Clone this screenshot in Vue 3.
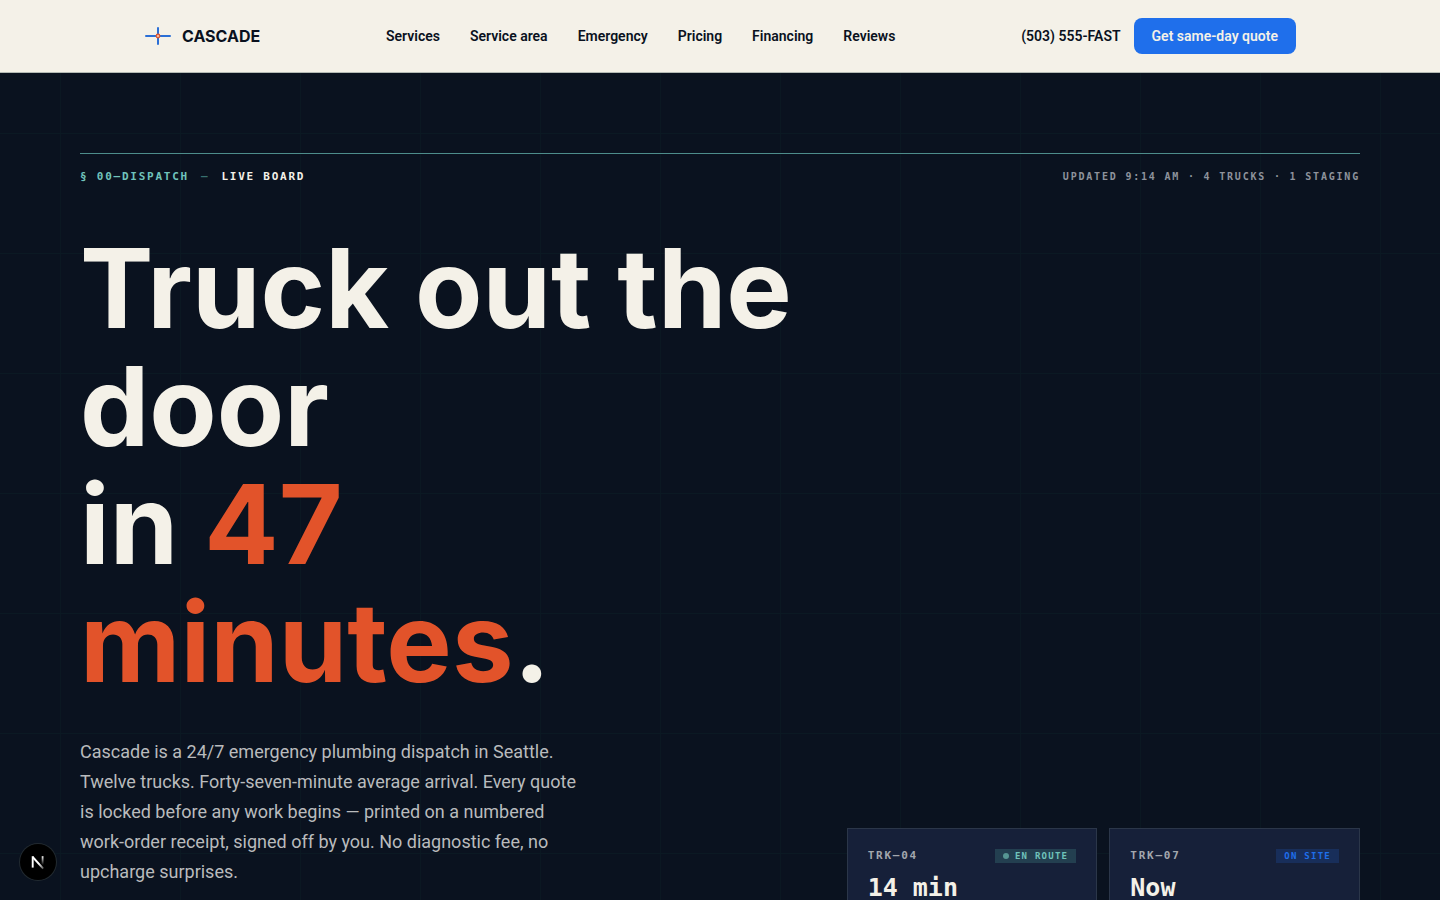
<script setup>
const links = ['Services', 'Service area', 'Emergency', 'Pricing', 'Financing', 'Reviews']
const trucks = [
  { id: 'TRK—04', status: 'EN ROUTE', kind: 'route', eta: '14 min' },
  { id: 'TRK—07', status: 'ON SITE', kind: 'site', eta: 'Now' },
]
</script>

<template>
  <div class="page">
    <header class="topbar">
      <div class="topbar-inner">
        <a class="brand" href="#">
          <svg width="28" height="18" viewBox="0 0 28 18" aria-hidden="true">
            <path d="M2 9H26M14 1V17" fill="none" stroke="#2b6fd6" stroke-width="2" stroke-linecap="round" />
            <circle cx="14" cy="9" r="1.8" fill="#f3b79c" stroke="#e2532a" stroke-width="1.2" />
          </svg>
          <span>CASCADE</span>
        </a>
        <nav class="nav" aria-label="Main">
          <a v-for="link in links" :key="link" href="#">{{ link }}</a>
        </nav>
        <div class="actions">
          <a class="phone" href="tel:+15035553278">(503) 555-FAST</a>
          <button class="quote" type="button">Get same-day quote</button>
        </div>
      </div>
    </header>

    <main class="hero">
      <div class="board-bar">
        <p class="board-title"><span>§ 00—DISPATCH</span><span class="dash">—</span><strong>LIVE BOARD</strong></p>
        <p class="board-meta">UPDATED 9:14 AM · 4 TRUCKS · 1 STAGING</p>
      </div>
      <div class="hero-grid">
        <div class="copy">
          <h1>Truck out the door<br />in <em>47<br />minutes</em>.</h1>
          <p class="lede">
            Cascade is a 24/7 emergency plumbing dispatch in Seattle. Twelve trucks.
            Forty-seven-minute average arrival. Every quote is locked before any work
            begins — printed on a numbered <span class="keep">work-order</span> receipt,
            signed off by you. No diagnostic fee, no upcharge surprises.
          </p>
        </div>
        <div class="trucks">
          <article v-for="truck in trucks" :key="truck.id" class="truck">
            <div class="truck-head">
              <span class="truck-id">{{ truck.id }}</span>
              <span class="status" :class="truck.kind"><i v-if="truck.kind === 'route'" class="dot"></i>{{ truck.status }}</span>
            </div>
            <div class="eta">{{ truck.eta }}</div>
          </article>
        </div>
      </div>
    </main>

    <button class="dev-badge" type="button" aria-label="Open developer tools">
      <svg width="36" height="36" viewBox="0 0 36 36" fill="none" aria-hidden="true">
        <defs>
          <linearGradient id="diag" x1="20" y1="19" x2="25" y2="26" gradientUnits="userSpaceOnUse">
            <stop stop-color="#fff" />
            <stop offset="1" stop-color="#fff" stop-opacity="0.1" />
          </linearGradient>
          <linearGradient id="stem" x1="23" y1="12" x2="23" y2="21" gradientUnits="userSpaceOnUse">
            <stop stop-color="#fff" />
            <stop offset="1" stop-color="#fff" stop-opacity="0" />
          </linearGradient>
        </defs>
        <path d="M12.7 13L23.2 24.6" stroke="url(#diag)" stroke-width="1.9" />
        <path d="M12.7 23.6V12.2" stroke="#fff" stroke-width="1.9" />
        <path d="M22.6 12.2V21" stroke="url(#stem)" stroke-width="1.8" />
      </svg>
    </button>
  </div>
</template>

<style>
body { background: #0a111e; }
</style>

<style scoped>
.page {
  height: 100vh;
  overflow: hidden;
  display: flex;
  flex-direction: column;
  background: #0a121f;
  font-family: Roboto, "Noto Sans", sans-serif;
  color: #f4f1e8;
}
a { color: inherit; text-decoration: none; }
p, h1 { margin: 0; }

.topbar {
  flex: none;
  background: #f4f1e8;
  border-bottom: 1px solid #b5bbb5;
  color: #0a111e;
}
.topbar-inner {
  display: flex;
  align-items: center;
  justify-content: space-between;
  max-width: 1152px;
  height: 72px;
  margin: 0 auto;
  font-size: 14px;
  font-weight: 600;
}
.brand {
  display: flex;
  align-items: center;
  gap: 10px;
  font-family: Inter, sans-serif;
  font-size: 16px;
  font-weight: 700;
}
.nav { display: flex; gap: 30px; }
.actions { display: flex; align-items: center; gap: 13px; }
.quote {
  height: 36px;
  padding: 0 18px;
  border: 0;
  border-radius: 8px;
  background: #1f6feb;
  color: #f4f1e8;
  font: inherit;
}

.hero {
  flex: none;
  padding: 80px 80px 0;
  background:
    linear-gradient(#0b1923 1px, transparent 1px) 0 60px / 120px 120px,
    linear-gradient(90deg, #0b1822 1px, transparent 1px) 60px 0 / 120px 120px,
    #0a121f;
}
.board-bar {
  display: flex;
  justify-content: space-between;
  align-items: center;
  border-top: 1px solid #4d8d8b;
  padding-top: 15px;
  font-family: "DejaVu Sans Mono", monospace;
  line-height: 16px;
}
.board-title {
  display: flex;
  gap: 12px;
  font-size: 11px;
  font-weight: 700;
  letter-spacing: 0.16em;
  color: #70c3bb;
}
.board-title .dash { color: #38706f; }
.board-title strong { color: #f4f1e8; }
.board-meta {
  font-size: 10px;
  font-weight: 700;
  letter-spacing: 0.18em;
  color: #8e939c;
}
.hero-grid {
  display: grid;
  grid-template-columns: 7fr 5fr;
  gap: 48px;
  padding-top: 44px;
}
.copy { padding-bottom: 39px; }
h1 {
  font-family: Inter, sans-serif;
  font-size: 110px;
  line-height: 118px;
  font-weight: 650;
}
h1 em { font-style: normal; color: #e2532a; }
.lede {
  max-width: 508px;
  margin-top: 36px;
  font-size: 18px;
  line-height: 30px;
  color: #b9bbbd;
}
.keep { white-space: nowrap; }

.trucks {
  align-self: end;
  display: grid;
  grid-template-columns: 1fr 1fr;
  gap: 12px;
}
.truck {
  padding: 20px;
  border: 1px solid #2b3649;
  background: #162039;
  font-family: "DejaVu Sans Mono", monospace;
}
.truck-head {
  display: flex;
  align-items: center;
  justify-content: space-between;
  line-height: 14px;
}
.truck-id {
  font-size: 11px;
  font-weight: 700;
  letter-spacing: 0.16em;
  color: #a3a7ae;
}
.status {
  display: flex;
  align-items: center;
  gap: 6px;
  padding: 0 8px;
  font-size: 9px;
  font-weight: 700;
  letter-spacing: 0.14em;
}
.status.route { background: #233f50; color: #70c3bb; }
.status.site { background: #182e5a; color: #1f6feb; }
.dot {
  width: 6px;
  height: 6px;
  border-radius: 50%;
  background: #569693;
}
.eta {
  margin-top: 8px;
  font-size: 25px;
  line-height: 34px;
  font-weight: 700;
}

.dev-badge {
  position: fixed;
  left: 20px;
  bottom: 20px;
  display: flex;
  padding: 0;
  border: 0;
  border-radius: 50%;
  background: #000;
  box-shadow: 0 0 0 1px #222a30;
}
</style>
